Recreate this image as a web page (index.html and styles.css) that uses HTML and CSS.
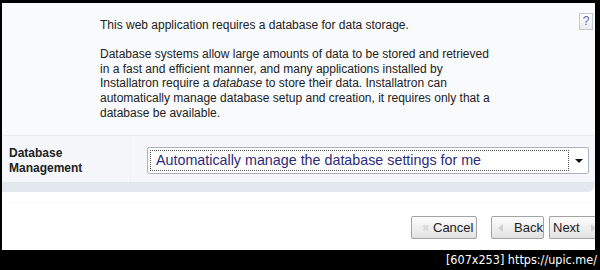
FILE: index.html
```html
<!DOCTYPE html>
<html>
<head>
<meta charset="utf-8">
<link rel="stylesheet" href="styles.css">
</head>
<body>
<div class="frame">
  <div class="panel">
    <div class="intro">
      <div class="intro-text">
        <p>This web application requires a database for data storage.</p>
        <p>Database systems allow large amounts of data to be stored and retrieved in a fast and efficient manner, and many applications installed by Installatron require a <em>database</em> to store their data. Installatron can automatically manage database setup and creation, it requires only that a database be available.</p>
      </div>
      <span class="help">?</span>
    </div>
    <div class="row">
      <div class="label">Database<br>Management</div>
      <div class="field">
        <div class="select">
          <span class="select-text">Automatically manage the database settings for me</span>
          <span class="arrow"></span>
        </div>
      </div>
    </div>
    <div class="band"></div>
  </div>
  <div class="actions">
    <button class="btn btn-cancel"><span class="ico ico-x">&#10006;</span>Cancel</button>
    <button class="btn btn-back"><span class="ico ico-l"></span>Back</button>
    <button class="btn btn-next">Next<span class="ico ico-r"></span></button>
  </div>
</div>
<div class="caption">[607x253] https://upic.me/</div>
</body>
</html>
```
FILE: styles.css
```css
html, body {
  margin: 0;
  padding: 0;
  background: #000;
  width: 600px;
  height: 270px;
  overflow: hidden;
  font-family: "Liberation Sans", Arial, sans-serif;
}
.frame {
  margin: 3px 0 0 2px;
  width: 593px;
  height: 247px;
  background: #fff;
  display: flex;
  flex-direction: column;
}
.panel {
  background: #f9fafc;
  border-bottom-right-radius: 8px;
}
.intro {
  height: 132px;
  display: flex;
  position: relative;
  box-sizing: border-box;
  padding: 15px 0 0 98px;
}
.intro-text {
  width: 398px;
  font-size: 12px;
  line-height: 14.8px;
  color: #222;
}
.intro-text p {
  margin: 0 0 14px 0;
}
.help {
  position: absolute;
  top: 10px;
  left: 577px;
  width: 12px;
  height: 15px;
  border: 1px solid #c4c8d0;
  background: linear-gradient(#ffffff, #e9ebef);
  color: #6466b0;
  font-size: 12px;
  line-height: 15px;
  text-align: center;
}
.row {
  height: 46px;
  border-top: 1px solid #e9ecf1;
  display: flex;
  background: #f5f7fa;
}
.label {
  width: 129px;
  box-sizing: border-box;
  padding: 10px 0 0 7px;
  font-weight: bold;
  font-size: 12px;
  line-height: 15px;
  color: #222;
  border-right: 1px solid #edf0f4;
}
.field {
  flex: 1;
  padding: 11px 0 0 16px;
}
.select {
  width: 440px;
  height: 25px;
  border: 1px solid #a9b3bf;
  border-radius: 2px;
  background: #fff;
  display: flex;
  align-items: center;
  box-sizing: content-box;
}
.select-text {
  flex: 1;
  margin: 2px 0 2px 2px;
  height: 19px;
  border: 1px dotted #555;
  font-size: 14.3px;
  line-height: 19px;
  padding-left: 5px;
  color: #2d2b78;
  white-space: nowrap;
}
.arrow {
  width: 19px;
  display: flex;
  justify-content: center;
}
.arrow::after {
  content: "";
  border-left: 4px solid transparent;
  border-right: 4px solid transparent;
  border-top: 4px solid #111;
}
.band {
  height: 10px;
  background: #e3e7ee;
  border-bottom-right-radius: 8px;
}
.actions {
  display: flex;
  justify-content: flex-end;
  padding: 13px 0 0 0;
  border-top: 1px solid #fafafa;
  margin-top: 10px;
}
.btn {
  height: 23px;
  border: 1px solid #a3a3a3;
  border-radius: 2px;
  background: linear-gradient(#fdfdfd, #e2e2e2);
  font-family: "Liberation Sans", Arial, sans-serif;
  font-size: 13px;
  color: #222;
  padding: 0;
  display: flex;
  align-items: center;
  box-sizing: border-box;
}
.btn-cancel {
  width: 66px;
  margin-right: 14px;
  padding-left: 6px;
}
.btn-back {
  width: 53px;
  margin-right: 5px;
  padding-left: 6px;
}
.btn-next {
  width: 46px;
  padding-left: 3px;
  border-right: none;
  border-radius: 2px 0 0 2px;
  overflow: hidden;
}
.ico {
  display: inline-block;
  flex: none;
}
.ico-x {
  color: #d8d8d8;
  font-size: 9px;
  width: 15px;
}
.ico-l {
  width: 0;
  height: 0;
  border-top: 4px solid transparent;
  border-bottom: 4px solid transparent;
  border-right: 5px solid #d0d0d0;
  margin-right: 11px;
}
.ico-r {
  width: 0;
  height: 0;
  border-top: 4px solid transparent;
  border-bottom: 4px solid transparent;
  border-left: 5px solid #d0d0d0;
  margin-left: 11px;
}
.caption {
  color: #fff;
  text-align: right;
  font-family: "DejaVu Sans Condensed", "DejaVu Sans", sans-serif;
  font-size: 12.5px;
  line-height: 20px;
  padding-right: 3px;
}
```
